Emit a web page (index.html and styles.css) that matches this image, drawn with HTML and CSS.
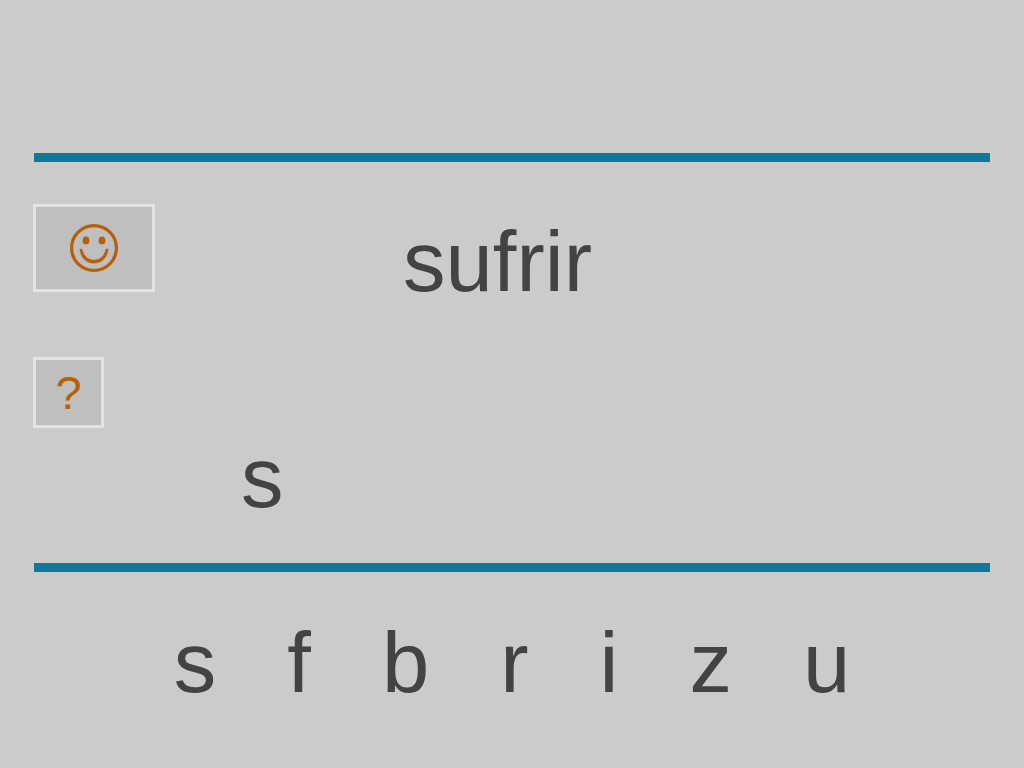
FILE: index.html
```html
<!DOCTYPE html>
<html lang="es">
<head>
  <meta charset="UTF-8" />
  <meta name="viewport" content="width=device-width, initial-scale=1.0"/>
  <title>sufrir</title>
  <link rel="stylesheet" href="styles.css">
</head>
<body>
  <main class="board">
    <hr class="rule">

    <section class="play">
      <div class="controls">
        <button type="button" class="key smile" aria-label="OK">
          <svg viewBox="0 0 48 48">
            <circle cx="24" cy="24" r="22.4" fill="none" stroke="currentColor" stroke-width="3.2"/>
            <ellipse cx="16" cy="16.4" rx="3.4" ry="3.9"/>
            <ellipse cx="32" cy="16.4" rx="3.4" ry="3.9"/>
            <path d="M9.9 25 C10.2 33 16 39.2 24 39.2 C32 39.2 37.8 33 38.1 25 H36 C34.5 31.5 30.5 36 24 36 C17.5 36 13.5 31.5 12 25 Z" stroke="currentColor" stroke-width="0.4"/>
          </svg>
        </button>
        <button type="button" class="key help">?</button>
      </div>
      <div class="words">
        <div class="word">sufrir</div>
        <div class="answer">s</div>
      </div>
    </section>

    <hr class="rule">

    <section class="letters">
      <button type="button" class="letter">s</button>
      <button type="button" class="letter">f</button>
      <button type="button" class="letter">b</button>
      <button type="button" class="letter">r</button>
      <button type="button" class="letter">i</button>
      <button type="button" class="letter">z</button>
      <button type="button" class="letter">u</button>
    </section>
  </main>
</body>
</html>
```

FILE: styles.css
```css
* {
  box-sizing: border-box;
}

body {
  margin: 0;
  background-color: #cbcbcb;
  color: #434343;
  font-family: "Liberation Sans", Arial, sans-serif;
  font-size: 85px;
  line-height: 96px;
}

button {
  margin: 0;
  padding: 0;
  border: none;
  background: none;
  color: inherit;
  font: inherit;
  cursor: pointer;
}

.board {
  padding: 153px 34px 0;
}

.rule {
  height: 9px;
  margin: 0;
  border: none;
  background-color: #10789a;
}

.play {
  display: grid;
  padding: 42px 0 38px;
}

.controls,
.words {
  grid-area: 1 / 1;
}

.controls {
  display: flex;
  flex-direction: column;
  align-items: flex-start;
  gap: 65px;
  margin-left: -1px;
  z-index: 1;
  justify-self: start;
}

.key {
  display: flex;
  align-items: center;
  justify-content: center;
  border: 3px solid #e3e3e3;
  background-color: #bfbfbf;
  color: #b95f06;
}

.smile {
  width: 122px;
  height: 88px;
}

.smile svg {
  width: 48px;
  height: 48px;
  fill: currentColor;
}

.help {
  width: 71px;
  height: 71px;
  font-size: 47px;
  line-height: 65px;
}

.words {
  display: flex;
  flex-direction: column;
  gap: 120px;
  padding-top: 10px;
  margin-bottom: -1px;
}

.word {
  padding-right: 29px;
  text-align: center;
}

.answer {
  padding-left: 207px;
}

.letters {
  display: flex;
  justify-content: center;
  gap: 71px;
  padding: 43px 0;
}
```
